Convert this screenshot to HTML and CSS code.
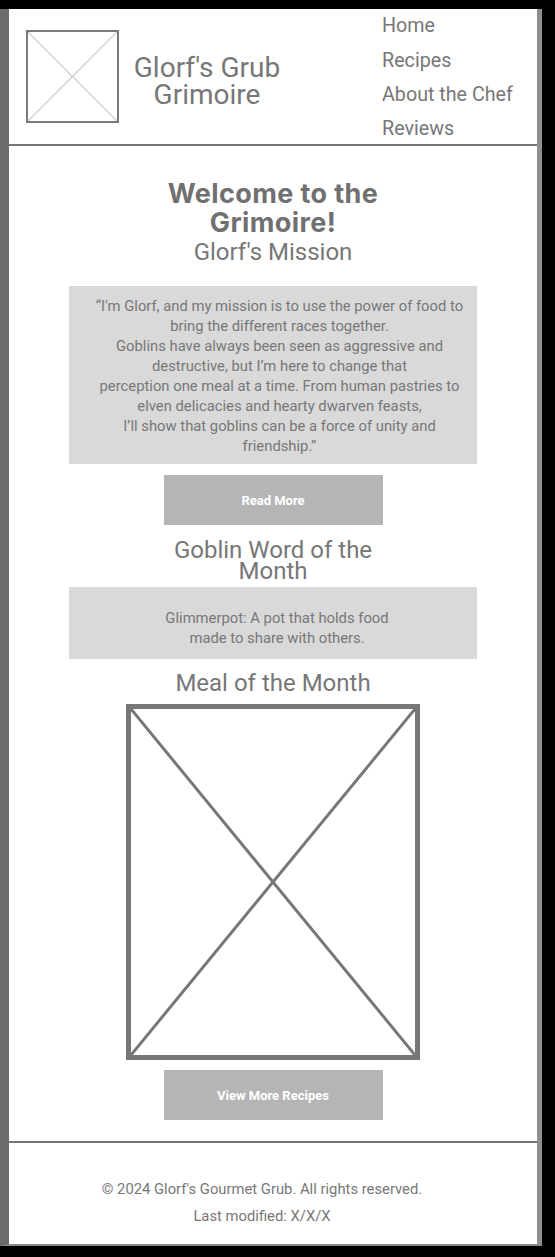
FILE: index.html
```html
<!DOCTYPE html>
<html lang="en">
<head>
<meta charset="utf-8">
<title>Glorf's Grub Grimoire</title>
<link rel="stylesheet" href="styles.css">
</head>
<body>
<div class="page">
  <header class="site-header">
    <div class="logo">
      <svg viewBox="0 0 100 100" preserveAspectRatio="none" width="100%" height="100%">
        <line x1="0" y1="0" x2="100" y2="100" stroke="#c9c9c9" stroke-width="1.2" vector-effect="non-scaling-stroke"/>
        <line x1="100" y1="0" x2="0" y2="100" stroke="#c9c9c9" stroke-width="1.2" vector-effect="non-scaling-stroke"/>
      </svg>
    </div>
    <div class="site-title">Glorf's Grub<br>Grimoire</div>
    <nav class="nav">
      <a href="#">Home</a>
      <a href="#">Recipes</a>
      <a href="#">About the Chef</a>
      <a href="#">Reviews</a>
    </nav>
  </header>
  <main class="main">
    <h1 class="welcome">Welcome to the<br>Grimoire!</h1>
    <h2 class="section-title">Glorf's Mission</h2>
    <div class="panel mission">
      <p>“I'm Glorf, and my mission is to use the power of food to<br>bring the different races together.<br>Goblins have always been seen as aggressive and<br>destructive, but I’m here to change that<br>perception one meal at a time. From human pastries to<br>elven delicacies and hearty dwarven feasts,<br>I’ll show that goblins can be a force of unity and<br>friendship.”</p>
    </div>
    <a class="button btn-read" href="#">Read More</a>
    <h2 class="section-title word-title">Goblin Word of the<br>Month</h2>
    <div class="panel word">
      <p>Glimmerpot: A pot that holds food<br>made to share with others.</p>
    </div>
    <h2 class="section-title meal-title">Meal of the Month</h2>
    <div class="meal-image">
      <svg viewBox="0 0 100 100" preserveAspectRatio="none" width="100%" height="100%">
        <line x1="0" y1="0" x2="100" y2="100" stroke="#777" stroke-width="3" vector-effect="non-scaling-stroke"/>
        <line x1="100" y1="0" x2="0" y2="100" stroke="#777" stroke-width="3" vector-effect="non-scaling-stroke"/>
      </svg>
    </div>
    <a class="button btn-more" href="#">View More Recipes</a>
  </main>
  <footer class="site-footer">
    <p>© 2024 Glorf's Gourmet Grub. All rights reserved.</p>
    <p>Last modified: X/X/X</p>
  </footer>
</div>
</body>
</html>
```

FILE: styles.css
```css
html, body {
  margin: 0;
  padding: 0;
  background: #000;
}
body {
  font-family: Roboto, "Liberation Sans", Arial, sans-serif;
  color: #777;
}
.page {
  margin-top: 9px;
  width: 528px;
  height: 1235px;
  background: #fff;
  border-left: 9px solid #6b6b6b;
  border-right: 5px solid #8f8f8f;
  border-bottom: 2px solid #888;
  display: flex;
  flex-direction: column;
}
.site-header {
  height: 135px;
  border-bottom: 2px solid #777;
  display: flex;
  align-items: center;
}
.logo {
  width: 89px;
  height: 89px;
  border: 2px solid #7a7a7a;
  margin-left: 17px;
  flex: none;
}
.logo svg { display: block; }
.site-title {
  margin-left: 10px;
  width: 156px;
  text-align: center;
  font-size: 28px;
  line-height: 27px;
  color: #777;
  padding-top: 8px;
}
.nav {
  margin-left: 97px;
  padding-top: 3px;
  display: flex;
  flex-direction: column;
}
.nav a {
  color: #777;
  text-decoration: none;
  font-size: 19.7px;
  line-height: 34.3px;
  white-space: nowrap;
}
.main {
  display: flex;
  flex-direction: column;
  align-items: center;
  padding-bottom: 21px;
  border-bottom: 2px solid #777;
}
.welcome {
  margin: 33px 0 0;
  font-family: Inter, "DejaVu Sans", sans-serif;
  font-weight: 700;
  font-size: 27px;
  line-height: 29px;
  color: #707070;
  text-align: center;
  letter-spacing: 0.4px;
}
.section-title {
  margin: 1px 0 0;
  font-weight: 400;
  font-size: 24px;
  line-height: 28px;
  color: #777;
  text-align: center;
}
.panel {
  width: 408px;
  background: #d9d9d9;
  text-align: center;
  font-size: 14.8px;
  line-height: 20px;
  color: #777;
  box-sizing: border-box;
}
.panel p { margin: 0; }
.mission {
  margin-top: 20px;
  padding: 10px 0 8px 13px;
}
.button {
  display: flex;
  align-items: center;
  justify-content: center;
  width: 219px;
  height: 50px;
  background: #b5b5b5;
  color: #fff;
  font-weight: 700;
  font-size: 13px;
  text-decoration: none;
}
.btn-read { margin-top: 11px; }
.word-title {
  margin-top: 15px;
  line-height: 21px;
}
.word {
  margin-top: 5px;
  padding: 21px 0 11px 8px;
}
.meal-title { margin-top: 10px; }
.meal-image {
  margin-top: 7px;
  width: 284px;
  height: 346px;
  border: 5px solid #777;
}
.meal-image svg { display: block; }
.btn-more { margin-top: 10px; }
.site-footer {
  flex: 1;
  padding: 33px 22px 0 0;
  text-align: center;
  font-size: 14.8px;
  line-height: 27px;
  color: #777;
}
.site-footer p { margin: 0; }
```
